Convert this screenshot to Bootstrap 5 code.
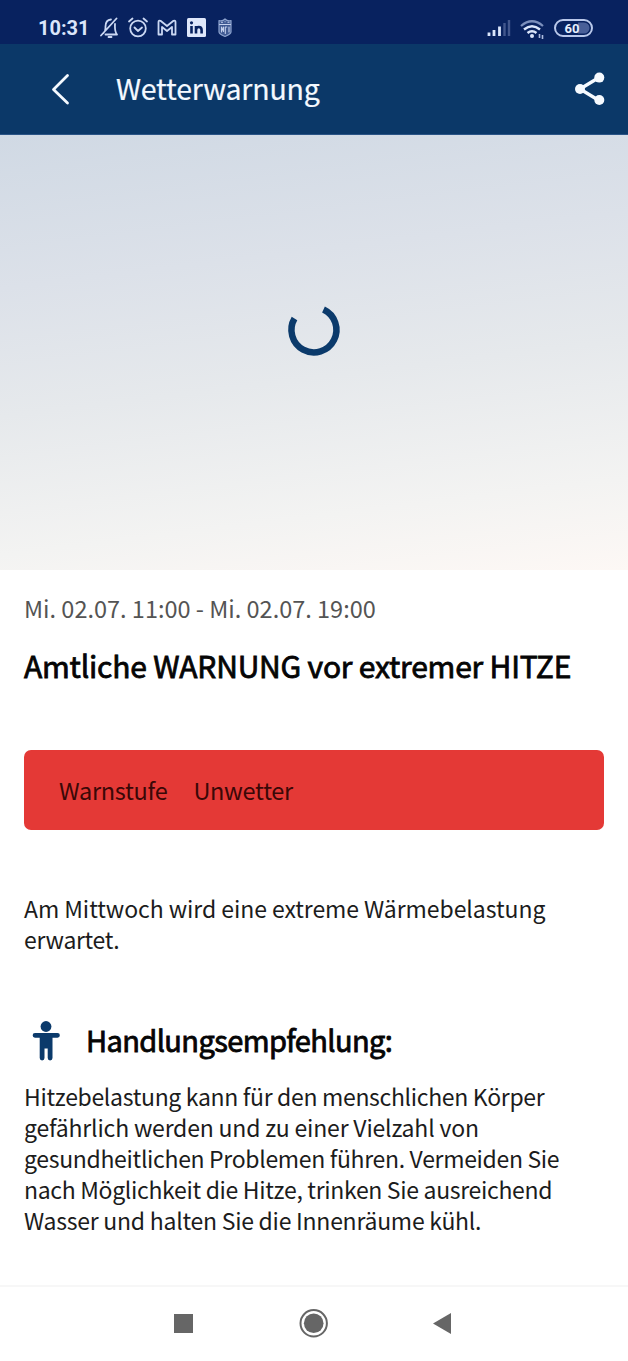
<!DOCTYPE html>
<html lang="de">
<head>
<meta charset="utf-8">
<meta name="viewport" content="width=device-width, initial-scale=1">
<title>Wetterwarnung</title>
<link rel="stylesheet" href="https://cdn.jsdelivr.net/npm/bootstrap@5.3.0/dist/css/bootstrap.min.css">
<script src="https://cdn.jsdelivr.net/npm/bootstrap@5.3.0/dist/js/bootstrap.bundle.min.js" defer></script>
<style>
  body { font-family: "Noto Sans CJK SC", "Noto Sans", sans-serif; color: #1c1c1c; background: #fff; height: 1361px; white-space: nowrap; }
  .statusbar { height: 44px; background: #08225f; padding: 11px 34px 0 38px; }
  .statusbar svg { display: block; flex: none; }
  .clock { font: 700 20px/35px Roboto, sans-serif; color: #dbe6fb; width: 62px; }
  .appbar { height: 91px; background: #0b3868; padding: 0 21px 0 48px; border-bottom: 1px solid #2a5486; }
  .appbar h1 { font-size: 28.500px; line-height: 40px; font-weight: 400; color: #f4f9ff; margin-left: 42px; padding-bottom: 2px; letter-spacing: -.2px; -webkit-text-stroke: .2px; }
  .hero { height: 435px; background: linear-gradient(173deg, #d0d9e4 0%, #dce1e9 30%, #e6e9ec 55%, #f3f3f2 82%, #fdf8f5 100%); padding-top: 168px; }
  .warn-date { font-size: 23.500px; line-height: 32px; color: #545454; margin-top: 22px; }
  .warn-title { font-size: 30px; line-height: 40px; font-weight: 400; color: #050505; margin-top: 21px; letter-spacing: -.2px; -webkit-text-stroke: .8px #050505; }
  .level { height: 80px; background: #e43936; border-radius: 7px; padding-left: 35px; font-size: 23.500px; color: #3a0807; margin-top: 65px; padding-top: 1px; letter-spacing: -.28px; gap: 26px; }
  .copy { font-size: 23px; line-height: 31px; letter-spacing: -.32px; }
  .summary { margin-top: 63px; }
  .instruction { margin-top: 20px; }
  .ls-a { letter-spacing: -.06px; }
  .ls-b { letter-spacing: -.18px; }
  .ls-c { letter-spacing: -.25px; }
  .advice { margin-top: 62px; }
  .advice svg { margin-top: 4px; }
  .advice h3 { font-size: 29px; line-height: 40px; font-weight: 400; color: #050505; margin-left: 18px; letter-spacing: -.6px; -webkit-text-stroke: .8px #050505; }
  .sysnav { height: 76px; border-top: 2px solid #f7f7f7; }
</style>
</head>
<body class="d-flex flex-column">
<header>
  <div class="statusbar d-flex">
    <span class="clock">10:31</span>
    <svg width="134" height="33" viewBox="100 11 134 33" fill="none" stroke="#cbd8f3" stroke-width="1.8" stroke-linecap="round" stroke-linejoin="round">
      <path d="M103.500 33 q2-1.500 2-5 q-.5-8 5.500-8.500 M115 24 q-.5 7.500 2 10.500 H105.500 M101 35.500 L116.500 18.500 M108.500 37 h3"/>
      <circle cx="138" cy="28.500" r="7.800"/><path d="M134.500 27.500 l3.500 3.500 4-3.500 M129 21.500 l3.500-3 M147 21.500 l-3.500-3"/>
      <path d="M158.500 34.500 V22 q0-2 2-1.200 L167 26 l6.500-5.200 q2-.8 2 1.200 V34.500 h-3.500 V27 l-5 4 -5-4 v7.500 z"/>
      <rect x="187" y="18" width="19" height="19" rx="1.500" fill="#dfe8fb" stroke="none"/>
      <path d="M191.500 26 v7.500 M196 26 v7.500 M196 30 q0-3 2.800-3 t2.800 3 v3.500" stroke="#08225f" stroke-width="2.600" stroke-linecap="butt"/><circle cx="191.500" cy="22.800" r="1.600" fill="#08225f" stroke="none"/>
      <path d="M219 20.500 q3.500 1 6-1.500 q2.500 2.500 6 1.500 V32 q0 2-6 4.500 q-6-2.500-6-4.500z" fill="#405a93" stroke="#8ea4cf" stroke-width="1.200"/>
      <path d="M219.500 24.500 h11 M221.500 32 v-5 l2 4.500 v-4.500 M225.300 33.500 v-6.500 h1.500 M229 27 v5 M221.500 22.300 h1 M225 21.800 h.1 M228 22.300 h1" stroke="#c3d0ec" stroke-width="1.100"/>
    </svg>
    <svg class="ms-auto" width="108" height="33" viewBox="486 11 108 33" fill="none" stroke="#dbe6fb" stroke-width="2.800">
      <path d="M489 36 v-3.500 M494 36 v-6 M499.500 36 v-9.500"/><path d="M504.500 36 V23 M509 36 V20" stroke="#42578d" stroke-width="2.400"/>
      <path d="M521 26 q11-9.500 22 0" stroke="#7b8fbc" stroke-width="2.200"/><path d="M524 29.500 q8-6.500 16 0 M527.500 33 q4.500-3.500 9 0" stroke-width="2.500"/><circle cx="532" cy="36" r="2" fill="#dbe6fb" stroke="none"/>
      <path d="M539.500 34 v4 M542.500 35 v4" stroke-width="1.600" stroke="#aebde0"/>
      <path d="M578 22.500 h6 a5.500 5.500 0 0 1 0 11 h-6z" fill="#485f98" stroke="none"/>
      <rect x="555" y="20" width="37" height="16" rx="8" stroke="#b9c8ea" stroke-width="2"/>
      <text x="564.500" y="32.700" font-family="Roboto, sans-serif" font-size="13" font-weight="700" fill="#e6eefc" stroke="none">60</text>
    </svg>
  </div>
  <nav class="appbar d-flex align-items-center">
    <svg width="26" height="40" viewBox="48 70 26 40" fill="none" stroke="#f4f9ff" stroke-width="2.800" stroke-linecap="round" stroke-linejoin="round"><path d="M67.500 76.500 L53.500 90.500 L67.500 104"/></svg>
    <h1 class="mb-0">Wetterwarnung</h1>
    <svg class="ms-auto" width="34" height="40" viewBox="573 69 34 40" fill="#f6faff"><path d="M599 77.500 L580 89 L599 100.500" fill="none" stroke="#f6faff" stroke-width="3.400"/><circle cx="599.300" cy="77.600" r="5"/><circle cx="580" cy="89" r="5"/><circle cx="599.300" cy="100" r="5"/></svg>
  </nav>
</header>
<section class="hero text-center">
  <svg width="56" height="56" viewBox="286 303 56 56" fill="none" stroke="#0b3a6b" stroke-width="6.500"><path d="M294.500 318.500 A22.500 22.500 0 1 0 323.500 309.500"/></svg>
</section>
<main class="px-4">
  <p class="warn-date mb-0">Mi. 02.07. 11:00 - Mi. 02.07. 19:00</p>
  <h2 class="warn-title mb-0">Amtliche WARNUNG vor extremer HITZE</h2>
  <div class="level d-flex align-items-center"><span>Warnstufe</span><span>Unwetter</span></div>
  <p class="copy summary mb-0"><span class="ls-a">Am Mittwoch wird eine extreme Wärmebelastung</span><br>erwartet.</p>
  <div class="advice d-flex align-items-center">
    <svg width="44" height="40" viewBox="24 1021 44 40" fill="#0b3a6b"><circle cx="46" cy="1026.500" r="5.400"/><path d="M35 1033 H57.500 a2.300 2.300 0 0 1 0 4.700 H52.500 V1058 a2.300 2.300 0 0 1-4.800 0 V1048.500 h-3.200 V1058 a2.300 2.300 0 0 1-4.800 0 V1037.700 H35 a2.300 2.300 0 0 1 0-4.700z"/></svg>
    <h3 class="mb-0">Handlungsempfehlung:</h3>
  </div>
  <p class="copy instruction mb-0">Hitzebelastung kann für den menschlichen Körper<br><span class="ls-b">gefährlich werden und zu einer Vielzahl von</span><br>gesundheitlichen Problemen führen. Vermeiden Sie<br>nach Möglichkeit die Hitze, trinken Sie ausreichend<br><span class="ls-c">Wasser und halten Sie die Innenräume kühl.</span></p>
</main>
<footer class="sysnav mt-auto">
  <svg class="d-block" width="628" height="74" viewBox="0 1287 628 74" fill="#666"><rect x="174" y="1314" width="19" height="19"/><circle cx="313.700" cy="1323.300" r="13.200" fill="none" stroke="#666" stroke-width="2"/><circle cx="313.700" cy="1323.300" r="9.800"/><path d="M433 1323.500 L451 1313 V1334z"/></svg>
</footer>
</body>
</html>
